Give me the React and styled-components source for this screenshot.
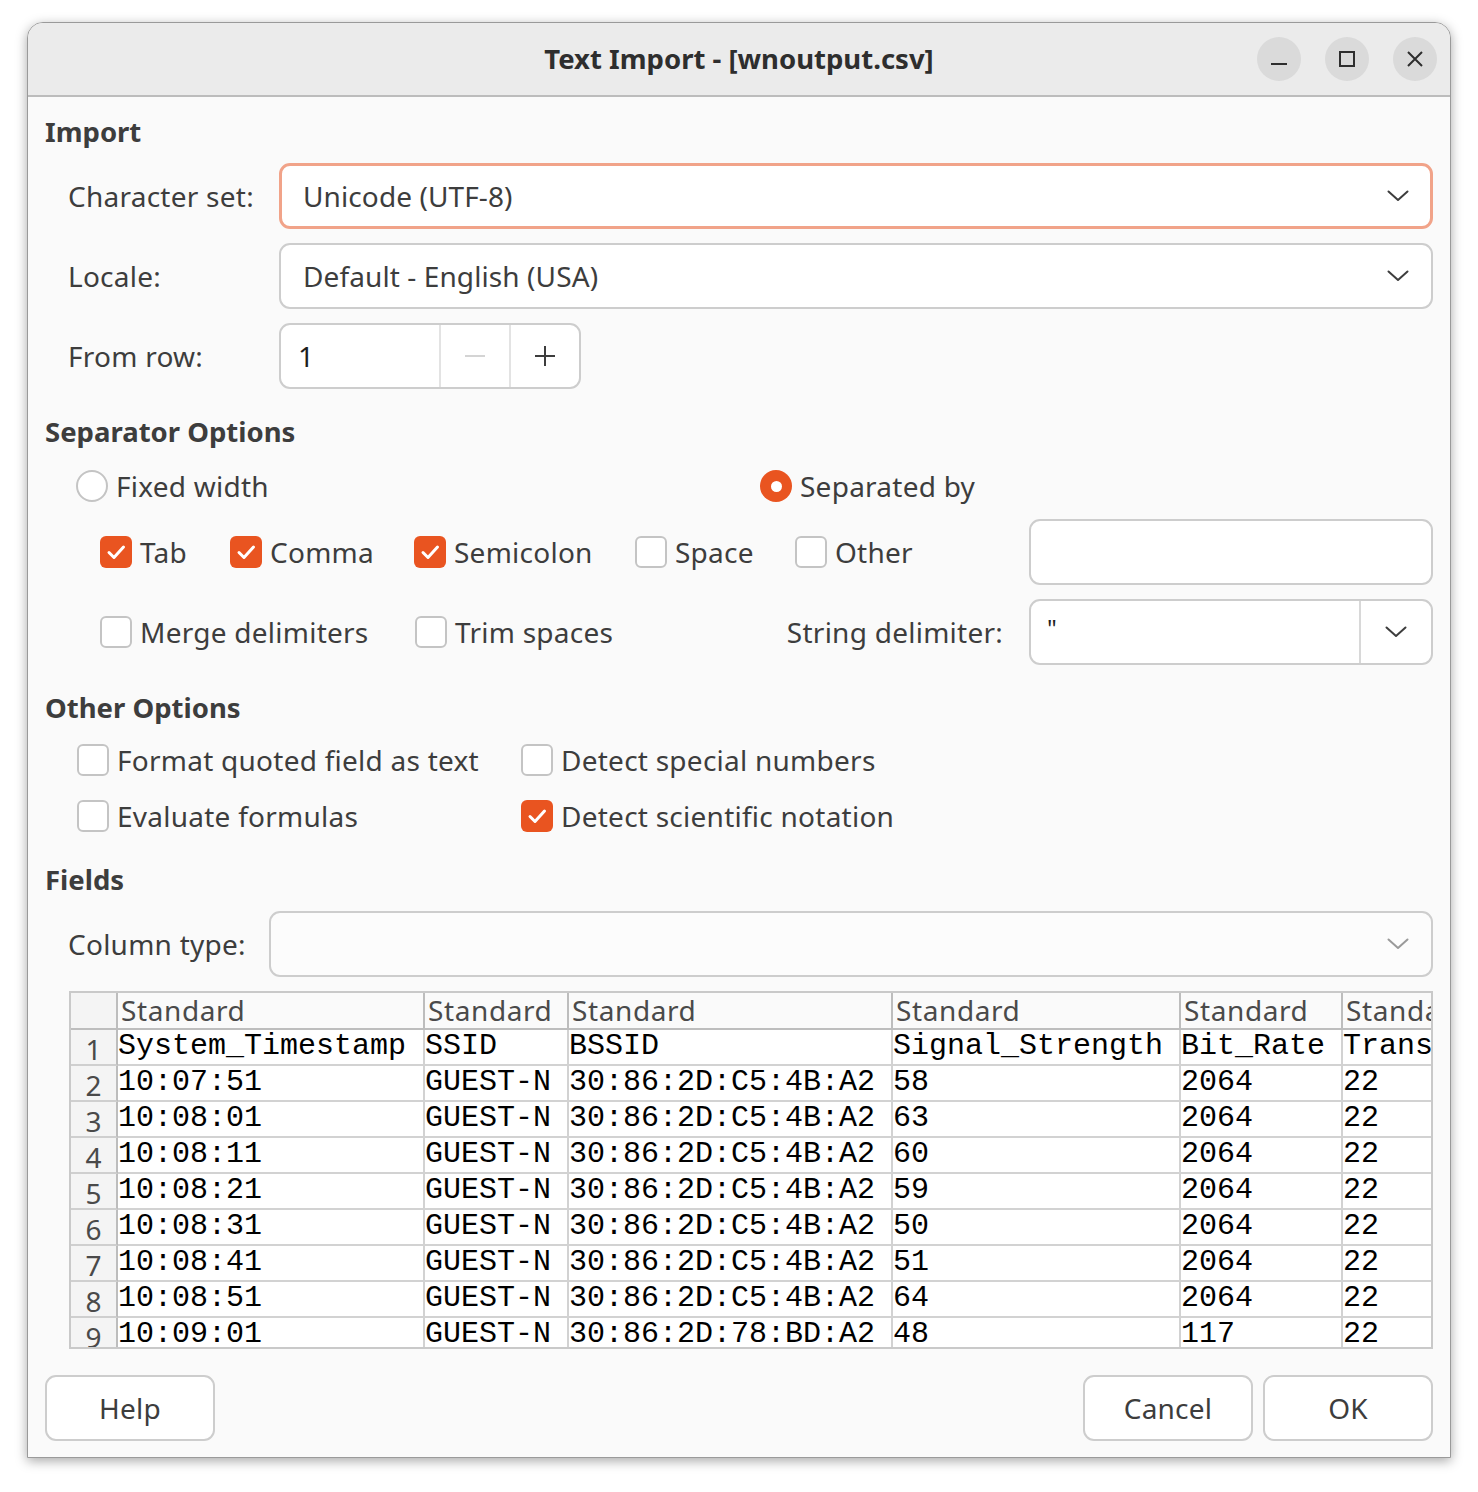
import React from 'react';
import styled, { createGlobalStyle } from 'styled-components';

const Global = createGlobalStyle`
  html, body { margin: 0; padding: 0; background: #ffffff; }
  body { font-family: "Noto Sans", "DejaVu Sans", sans-serif; color: #3d3d3d; }
`;

const Page = styled.div`
  padding: 22px 27px 0 27px;
  width: 1478px;
  height: 1492px;
  box-sizing: border-box;
`;

const Window = styled.div`
  width: 1424px;
  height: 1436px;
  box-sizing: border-box;
  border: 1px solid #9a9a9a;
  border-radius: 16px 16px 0 0;
  background: #fafafa;
  overflow: hidden;
  box-shadow: 0 3px 12px rgba(0, 0, 0, 0.35);
  display: flex;
  flex-direction: column;
`;

const TitleBar = styled.div`
  height: 72px;
  flex: none;
  background: #ebebeb;
  border-bottom: 2px solid #bcbcbc;
  display: grid;
  grid-template-columns: 1fr auto 1fr;
  align-items: center;
  padding-right: 13px;
  padding-left: 13px;
`;

const Title = styled.div`
  grid-column: 2;
  font-size: 27.5px;
  font-weight: 700;
  color: #2e2e2e;
  margin-top: -2px;
`;

const WinButtons = styled.div`
  grid-column: 3;
  justify-self: end;
  display: flex;
  gap: 24px;
`;

const WinButton = styled.div`
  width: 44px;
  height: 44px;
  border-radius: 50%;
  background: #dadada;
  display: flex;
  align-items: center;
  justify-content: center;
`;

const Content = styled.div`
  flex: 1;
  padding: 18px 17px 17px 17px;
  display: flex;
  flex-direction: column;
`;

const SectionTitle = styled.div`
  height: 34px;
  line-height: 34px;
  font-size: 27.5px;
  font-weight: 700;
  color: #3d3d3d;
  margin-top: ${(p) => p.$mt || 0}px;
`;

const FormRow = styled.div`
  display: grid;
  grid-template-columns: ${(p) => p.$labelWidth}px 1fr;
  align-items: center;
  margin-top: ${(p) => p.$mt}px;
`;

const Label = styled.div`
  padding-left: ${(p) => (p.$indent ?? 23)}px;
  font-size: 28px;
  letter-spacing: 0.25px;
  color: #3d3d3d;
  white-space: nowrap;
`;

const Combo = styled.div`
  height: 66px;
  box-sizing: border-box;
  border: ${(p) => (p.$focus ? '3px solid #f1a389' : '2px solid #cdcdcd')};
  border-radius: 11px;
  background: ${(p) => (p.$disabled ? '#fcfcfc' : '#ffffff')};
  display: flex;
  align-items: center;
  padding-left: ${(p) => (p.$focus ? 21 : 22)}px;
  padding-right: ${(p) => (p.$focus ? 21 : 22)}px;
  font-size: 28px;
  letter-spacing: 0.1px;
  color: #3d3d3d;
`;

const ComboText = styled.div`
  flex: 1;
  white-space: nowrap;
`;

const Spin = styled.div`
  width: 302px;
  height: 66px;
  box-sizing: border-box;
  border: 2px solid #cdcdcd;
  border-radius: 11px;
  background: #ffffff;
  display: flex;
  overflow: hidden;
`;

const SpinValue = styled.div`
  flex: 1;
  padding-left: 17px;
  display: flex;
  align-items: center;
  font-size: 28px;
  color: #1e1e1e;
`;

const SpinBtn = styled.div`
  width: 70px;
  box-sizing: border-box;
  border-left: 2px solid #e3e3e3;
  display: flex;
  align-items: center;
  justify-content: center;
`;

const RadioRow = styled.div`
  display: grid;
  grid-template-columns: 684px auto;
  padding-left: 31px;
  height: 34px;
  align-items: center;
  margin-top: 18px;
`;

const Option = styled.label`
  display: flex;
  align-items: center;
  gap: ${(p) => p.$gap ?? 8}px;
  font-size: 28px;
  letter-spacing: 0.25px;
  color: #3d3d3d;
  white-space: nowrap;
  width: ${(p) => (p.$w ? p.$w + 'px' : 'auto')};
  flex: ${(p) => (p.$grow ? 1 : 'none')};
`;

const RadioCircle = styled.span`
  width: 32px;
  height: 32px;
  box-sizing: border-box;
  border-radius: 50%;
  flex: none;
  background: ${(p) => (p.$on ? '#e95420' : '#ffffff')};
  border: ${(p) => (p.$on ? 'none' : '2px solid #c4c4c4')};
  display: flex;
  align-items: center;
  justify-content: center;
  &::after {
    content: '';
    display: ${(p) => (p.$on ? 'block' : 'none')};
    width: 11px;
    height: 11px;
    border-radius: 50%;
    background: #ffffff;
  }
`;

const Box = styled.span`
  width: 32px;
  height: 32px;
  box-sizing: border-box;
  border-radius: 6px;
  flex: none;
  background: ${(p) => (p.$on ? '#e95420' : '#ffffff')};
  border: ${(p) => (p.$on ? 'none' : '2px solid #c4c4c4')};
  display: flex;
  align-items: center;
  justify-content: center;
`;

const FlexRow = styled.div`
  display: flex;
  align-items: center;
  height: 66px;
  padding-left: ${(p) => p.$pl}px;
  margin-top: ${(p) => p.$mt}px;
`;

const TextField = styled.div`
  width: 404px;
  height: 66px;
  box-sizing: border-box;
  border: 2px solid #cdcdcd;
  border-radius: 11px;
  background: #ffffff;
  margin-left: auto;
`;

const DelimCombo = styled.div`
  width: 404px;
  height: 66px;
  box-sizing: border-box;
  border: 2px solid #cdcdcd;
  border-radius: 11px;
  background: #ffffff;
  display: flex;
  margin-left: 26px;
`;

const DelimText = styled.div`
  flex: 1;
  padding: 10px 0 0 16px;
  font-size: 24px;
  color: #1e1e1e;
`;

const DelimBtn = styled.div`
  width: 70px;
  border-left: 2px solid #d8d8d8;
  display: flex;
  align-items: center;
  justify-content: center;
`;

const OptionsGrid = styled.div`
  display: grid;
  grid-template-columns: 444px auto;
  grid-auto-rows: 40px;
  row-gap: 16px;
  align-items: center;
  padding-left: 32px;
  margin-top: 15px;
`;

const Table = styled.div`
  margin-top: 14px;
  margin-left: 24px;
  width: 1364px;
  height: 358px;
  box-sizing: border-box;
  border: 2px solid #c9c9c9;
  background: #ffffff;
  overflow: hidden;
  display: grid;
  grid-template-columns: 47px 307px 144px 324px 288px 162px 200px;
  grid-template-rows: 37px;
  grid-auto-rows: 36px;
`;

const HeadCell = styled.div`
  background: ${(p) => (p.$corner ? '#f4f4f4' : '#fafafa')};
  border-right: 2px solid #bdbdbd;
  border-bottom: 2px solid #bdbdbd;
  font-size: 28px;
  letter-spacing: 0.6px;
  color: #4a4a4a;
  padding-left: 3px;
  line-height: 34px;
  white-space: nowrap;
`;

const RowHead = styled.div`
  background: #f4f4f4;
  border-right: 2px solid #bdbdbd;
  border-bottom: 2px solid #cfcfcf;
  font-size: 28px;
  color: #4a4a4a;
  text-align: center;
  line-height: 36px;
  padding-top: 1px;
  box-sizing: border-box;
`;

const Cell = styled.div`
  border-right: 2px solid #d2d2d2;
  border-bottom: 2px solid #d2d2d2;
  font-family: "Liberation Mono", "DejaVu Sans Mono", monospace;
  font-size: 30px;
  color: #000000;
  line-height: 32px;
  white-space: nowrap;
  overflow: hidden;
  box-sizing: border-box;
`;

const ButtonBar = styled.div`
  display: flex;
  gap: 10px;
  margin-top: 26px;
`;

const Button = styled.div`
  width: 170px;
  height: 66px;
  box-sizing: border-box;
  border: 2px solid #cdcdcd;
  border-radius: 11px;
  background: #ffffff;
  display: flex;
  align-items: center;
  justify-content: center;
  font-size: 28px;
  letter-spacing: 0.2px;
  color: #3d3d3d;
  margin-left: ${(p) => (p.$push ? 'auto' : '0')};
`;

const Chevron = ({ color = '#3d3d3d' }) => (
  <svg width="22" height="12" viewBox="0 0 22 12">
    <path d="M1.5 1.5 L11 10 L20.5 1.5" fill="none" stroke={color} strokeWidth="2" strokeLinecap="round" strokeLinejoin="round" />
  </svg>
);

const Check = () => (
  <svg width="32" height="32" viewBox="0 0 32 32">
    <path d="M9 16.5 L14 21.5 L23.5 11" fill="none" stroke="#ffffff" strokeWidth="3" strokeLinecap="round" strokeLinejoin="round" />
  </svg>
);

const CheckOpt = ({ on, label, w, grow }) => (
  <Option $w={w} $grow={grow}>
    <Box $on={on}>{on && <Check />}</Box>
    {label}
  </Option>
);

const rows = [
  ['System_Timestamp', 'SSID', 'BSSID', 'Signal_Strength', 'Bit_Rate', 'Trans'],
  ['10:07:51', 'GUEST-N', '30:86:2D:C5:4B:A2', '58', '2064', '22'],
  ['10:08:01', 'GUEST-N', '30:86:2D:C5:4B:A2', '63', '2064', '22'],
  ['10:08:11', 'GUEST-N', '30:86:2D:C5:4B:A2', '60', '2064', '22'],
  ['10:08:21', 'GUEST-N', '30:86:2D:C5:4B:A2', '59', '2064', '22'],
  ['10:08:31', 'GUEST-N', '30:86:2D:C5:4B:A2', '50', '2064', '22'],
  ['10:08:41', 'GUEST-N', '30:86:2D:C5:4B:A2', '51', '2064', '22'],
  ['10:08:51', 'GUEST-N', '30:86:2D:C5:4B:A2', '64', '2064', '22'],
  ['10:09:01', 'GUEST-N', '30:86:2D:78:BD:A2', '48', '117', '22'],
];

export default function App() {
  return (
    <Page>
      <Global />
      <Window>
        <TitleBar>
          <Title>Text Import - [wnoutput.csv]</Title>
          <WinButtons>
            <WinButton>
              <svg width="18" height="18" viewBox="0 0 18 18">
                <path d="M1 14 H17" stroke="#2e2e2e" strokeWidth="2" />
              </svg>
            </WinButton>
            <WinButton>
              <svg width="18" height="18" viewBox="0 0 18 18">
                <rect x="2" y="2" width="14" height="14" fill="none" stroke="#2e2e2e" strokeWidth="2" />
              </svg>
            </WinButton>
            <WinButton>
              <svg width="18" height="18" viewBox="0 0 18 18">
                <path d="M2 2 L16 16 M16 2 L2 16" stroke="#2e2e2e" strokeWidth="2" />
              </svg>
            </WinButton>
          </WinButtons>
        </TitleBar>
        <Content>
          <SectionTitle>Import</SectionTitle>
          <FormRow $labelWidth={234} $mt={14}>
            <Label>Character set:</Label>
            <Combo $focus>
              <ComboText>Unicode (UTF-8)</ComboText>
              <Chevron />
            </Combo>
          </FormRow>
          <FormRow $labelWidth={234} $mt={14}>
            <Label>Locale:</Label>
            <Combo>
              <ComboText>Default - English (USA)</ComboText>
              <Chevron />
            </Combo>
          </FormRow>
          <FormRow $labelWidth={234} $mt={14}>
            <Label>From row:</Label>
            <Spin>
              <SpinValue>1</SpinValue>
              <SpinBtn>
                <svg width="22" height="22" viewBox="0 0 22 22">
                  <path d="M1 11 H21" stroke="#d4d4d4" strokeWidth="2" />
                </svg>
              </SpinBtn>
              <SpinBtn>
                <svg width="22" height="22" viewBox="0 0 22 22">
                  <path d="M1 11 H21 M11 1 V21" stroke="#3d3d3d" strokeWidth="2" />
                </svg>
              </SpinBtn>
            </Spin>
          </FormRow>

          <SectionTitle $mt={26}>Separator Options</SectionTitle>
          <RadioRow>
            <Option>
              <RadioCircle />
              Fixed width
            </Option>
            <Option>
              <RadioCircle $on />
              Separated by
            </Option>
          </RadioRow>
          <FlexRow $pl={55} $mt={18}>
            <CheckOpt on label="Tab" w={130} />
            <CheckOpt on label="Comma" w={184} />
            <CheckOpt on label="Semicolon" w={221} />
            <CheckOpt label="Space" w={160} />
            <CheckOpt label="Other" />
            <TextField />
          </FlexRow>
          <FlexRow $pl={55} $mt={14}>
            <CheckOpt label="Merge delimiters" w={315} />
            <CheckOpt label="Trim spaces" grow />
            <Label $indent={0}>String delimiter:</Label>
            <DelimCombo>
              <DelimText>"</DelimText>
              <DelimBtn>
                <Chevron />
              </DelimBtn>
            </DelimCombo>
          </FlexRow>

          <SectionTitle $mt={26}>Other Options</SectionTitle>
          <OptionsGrid>
            <CheckOpt label="Format quoted field as text" />
            <CheckOpt label="Detect special numbers" />
            <CheckOpt label="Evaluate formulas" />
            <CheckOpt on label="Detect scientific notation" />
          </OptionsGrid>

          <SectionTitle $mt={27}>Fields</SectionTitle>
          <FormRow $labelWidth={224} $mt={14}>
            <Label>Column type:</Label>
            <Combo $disabled>
              <ComboText />
              <Chevron color="#9a9a9a" />
            </Combo>
          </FormRow>

          <Table>
            <HeadCell $corner />
            {Array.from({ length: 6 }).map((_, i) => (
              <HeadCell key={i}>Standard</HeadCell>
            ))}
            {rows.map((r, i) => (
              <React.Fragment key={i}>
                <RowHead>{i + 1}</RowHead>
                {r.map((c, j) => (
                  <Cell key={j}>{c}</Cell>
                ))}
              </React.Fragment>
            ))}
          </Table>

          <ButtonBar>
            <Button>Help</Button>
            <Button $push>Cancel</Button>
            <Button>OK</Button>
          </ButtonBar>
        </Content>
      </Window>
    </Page>
  );
}
